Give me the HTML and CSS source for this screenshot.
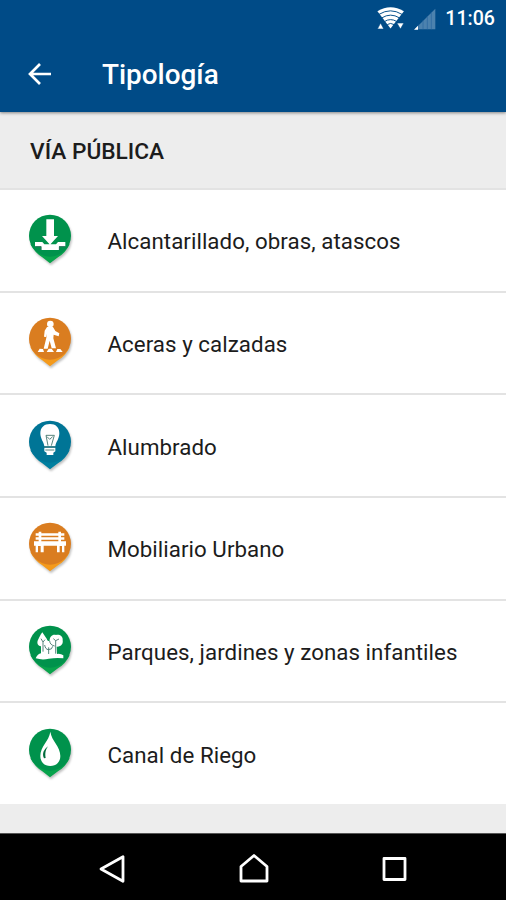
FILE: index.html
```
<!DOCTYPE html>
<html lang="es">
<head>
  <meta charset="UTF-8">
  <title>Tipología</title>
  <link rel="stylesheet" href="styles.css">
</head>
<body>
  <header>
    <div class="status">
      <svg class="wifi" viewBox="0 0 84 72">
        <path fill="#fff" d="M1 13 Q42 -11 84 13 L42 67Z"/>
        <path fill="none" stroke="#004b87" stroke-width="3" d="M6 23 Q42 1 78 23M15 34 Q42 17 70 34M24 45 Q42 34 61 45M32 55 Q42 48 53 55"/>
        <path fill="#fff" stroke="#004b87" stroke-width="2" d="M1 69 11 50 21 69ZM62 50H84L73 69Z"/>
      </svg>
      <svg class="signal" viewBox="0 0 66 66">
        <path fill="#4c82ae" d="M2 64 64 2V64Z"/>
        <path stroke="#2866a0" stroke-width="2" d="M14 50V64M27 37V64M40 24V64M52 12V64"/>
        <path fill="#fff" d="M0 65 12 53V65Z"/>
      </svg>
      <span class="clock">11:06</span>
    </div>
    <div class="toolbar">
      <svg class="back" viewBox="0 0 24 24"><path d="M23 12H2M12 2 2 12 12 22"/></svg>
      <h1>Tipología</h1>
    </div>
  </header>

  <h2>VÍA PÚBLICA</h2>

  <ul class="list">
    <li>
      <svg class="pin green" viewBox="0 0 210 210">
        <path class="tip" d="M46 118 Q61 145 81 156L105 175 130 156Q151 145 164 118Z"/>
        <circle cx="105" cy="92" r="63"/>
        <path class="art" d="M94 43H117V93H129L105 119 81 93H94ZM60 111H82L88 118H123L129 111H151V124H132V135H79V124H60Z"/>
        <path class="cut" d="M61 125H78V135M151 125H133V135"/>
      </svg>
      <span>Alcantarillado, obras, atascos</span>
    </li>
    <li>
      <svg class="pin orange" viewBox="0 0 210 210">
        <path class="tip" d="M46 118 Q61 145 81 156L105 175 130 156Q151 145 164 118Z"/>
        <circle cx="105" cy="92" r="63"/>
        <circle class="art" cx="106" cy="48" r="10"/>
        <path class="art" d="M96 57H114L121 69 133 76 131 85 116 80 115 91 123 121H110L104 98 98 122H86L94 89 95 77 93 87 87 86 89 68Z"/>
        <path class="art" d="M68 132 74 122 84 123 87 132ZM95 132 101 122H110L117 132ZM123 132 127 123H136L143 132Z"/>
      </svg>
      <span>Aceras y calzadas</span>
    </li>
    <li>
      <svg class="pin blue" viewBox="0 0 210 210">
        <path class="tip" d="M46 118 Q61 145 81 156L105 175 130 156Q151 145 164 118Z"/>
        <circle cx="105" cy="92" r="63"/>
        <path class="art" d="M88 106C87 94 76 84 76 67C76 49 88 39 105 39S133 49 133 67C133 84 122 94 121 106ZM88 110H121V121L115 125V132H95V125L88 121Z"/>
        <path class="cut" d="M99 104 93 73H118L109 104M96 77 104 85 113 77M87 108H122M91 117H118"/>
      </svg>
      <span>Alumbrado</span>
    </li>
    <li>
      <svg class="pin orange" viewBox="0 0 210 210">
        <path class="tip" d="M46 118 Q61 145 81 156L105 175 130 156Q151 145 164 118Z"/>
        <circle cx="105" cy="92" r="63"/>
        <path class="art" d="M62 61H71V56H79V61H130V56H138V61H148V68H138V73H148V80H138V85H153V98H148V118H141V99H134V118H126V98H86V118H77V99H69V118H62V98H57V85H71V80H62V73H71V68H62ZM79 68V73H130V68ZM79 80V85H130V80Z"/>
      </svg>
      <span>Mobiliario Urbano</span>
    </li>
    <li>
      <svg class="pin green" viewBox="0 0 210 210">
        <path class="tip" d="M46 118 Q61 145 81 156L105 175 130 156Q151 145 164 118Z"/>
        <circle cx="105" cy="92" r="63"/>
        <path class="art" d="M82 49C75 57 73 65 70 70C64 80 68 90 78 91V112Q68 113 62 127Q83 133 101 128Q126 124 145 127V118Q136 112 126 114L125 92C139 93 145 83 143 73C145 60 132 54 123 57C114 53 103 62 104 74C97 77 97 70 93 65Z"/>
        <path class="cut" d="M78 68 84 78 90 71M84 78V107M104 75Q105 87 119 90M115 68 122 74 132 69M122 74V113M89 87Q91 100 100 101Q112 101 113 91M101 94V114"/>
      </svg>
      <span>Parques, jardines y zonas infantiles</span>
    </li>
    <li>
      <svg class="pin green" viewBox="0 0 210 210">
        <path class="tip" d="M46 118 Q61 145 81 156L105 175 130 156Q151 145 164 118Z"/>
        <circle cx="105" cy="92" r="63"/>
        <path class="art" d="M106 38C110 66 136 82 136 111C136 129 124 141 106 141S76 129 76 111C76 82 102 66 106 38Z"/>
        <path class="leaf" d="M99 82C87 91 80 104 87 118L92 117C90 103 91 94 99 82Z"/>
      </svg>
      <span>Canal de Riego</span>
    </li>
  </ul>

  <nav>
    <svg viewBox="0 0 30 30"><path d="M3 15 25 2.7V27.3Z"/></svg>
    <svg viewBox="0 0 30 30"><path d="M2 27V12.5L15 1.5 28 12.5V27Z"/></svg>
    <svg viewBox="0 0 30 30"><path d="M5 4.5H26V25.5H5Z"/></svg>
  </nav>
</body>
</html>
```

FILE: styles.css
```
* {
  box-sizing: border-box;
}
body {
  margin: 0;
  height: 900px;
  display: flex;
  flex-direction: column;
  background: #ededed;
  color: #1c1c1c;
  font-family: Roboto, sans-serif;
  overflow: hidden;
}
header {
  height: 112px;
  background: #004b87;
  color: #fff;
  box-shadow: 0 1px 3px rgba(0, 0, 0, 0.45);
}
.status {
  height: 37px;
  display: flex;
  justify-content: flex-end;
  align-items: center;
  padding-right: 11px;
}
.wifi {
  width: 27px;
  height: 23px;
}
.signal {
  width: 22px;
  height: 22px;
  margin: 0 9px 0 10px;
}
.clock {
  font-size: 19.6px;
  font-weight: 500;
}
.toolbar {
  height: 74px;
  display: flex;
  align-items: center;
  padding-left: 28px;
}
.back {
  width: 24px;
  height: 24px;
  fill: none;
  stroke: #fff;
  stroke-width: 2.7;
}
h1 {
  margin: 0 0 0 50px;
  padding-top: 1px;
  font-size: 27.9px;
  font-weight: 500;
}
h2 {
  margin: 0;
  height: 76px;
  line-height: 79px;
  padding-left: 30px;
  font-size: 22.7px;
  font-weight: 500;
}
.list {
  margin: 0;
  padding: 0;
  list-style: none;
}
.list li {
  height: 102.7px;
  display: flex;
  align-items: center;
  padding-left: 15px;
  background: #fff;
  border-top: 2px solid #e3e3e3;
  font-size: 22.3px;
}
.list span {
  margin-left: 22.5px;
  padding-top: 2px;
  letter-spacing: 0.05px;
}
.pin {
  width: 70px;
  height: 70px;
  filter: drop-shadow(1px 2px 1px rgba(0, 0, 0, 0.25));
}
.green {
  fill: #00924c;
}
.orange {
  fill: #da7d20;
}
.blue {
  fill: #007596;
}
.green .tip {
  fill: #08a34c;
}
.orange .tip {
  fill: #f49a1c;
}
.blue .tip {
  fill: #007f9f;
}
.art {
  fill: #fff;
}
.cut {
  fill: none;
  stroke: #366b62;
  stroke-width: 2.5;
}
.leaf {
  fill: #006c3c;
}
nav {
  height: 67px;
  margin-top: auto;
  display: flex;
  justify-content: space-between;
  align-items: center;
  padding: 4px 97px 0 98px;
  background: #000;
  border-top: 1px solid #555;
}
nav svg {
  width: 30px;
  height: 30px;
  fill: none;
  stroke: #fff;
  stroke-width: 2.8;
  stroke-linejoin: round;
}
```
